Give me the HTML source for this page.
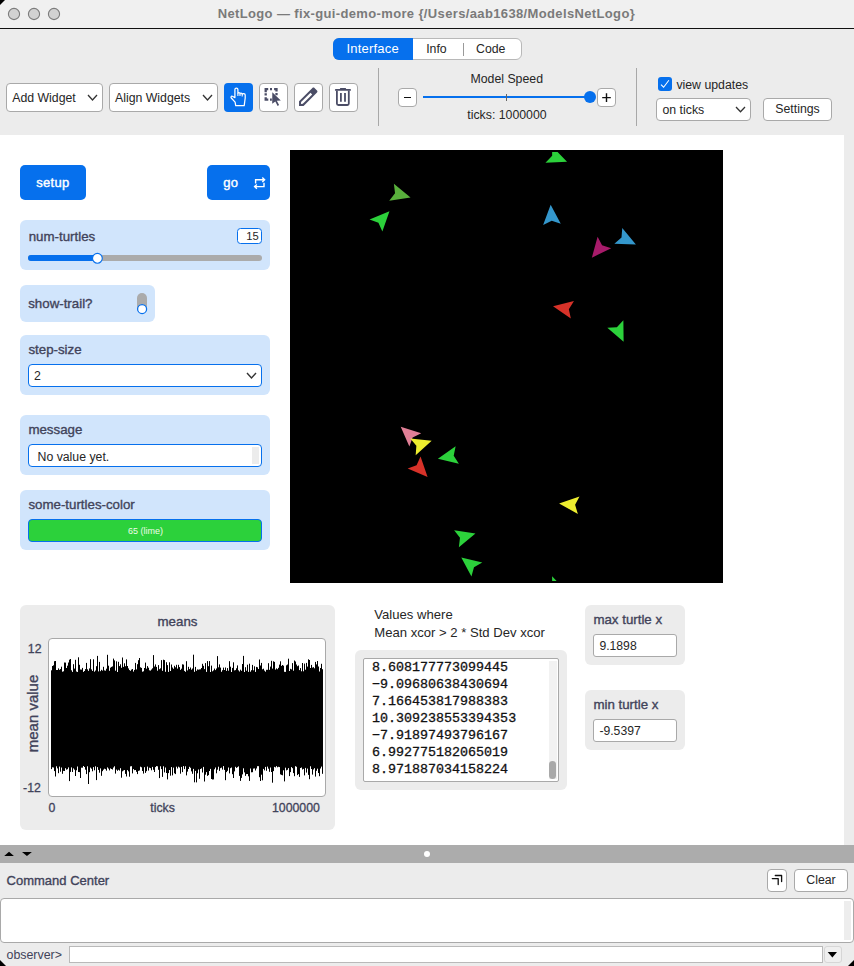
<!DOCTYPE html><html><head><meta charset="utf-8"><style>html,body{margin:0;padding:0;width:854px;height:966px;overflow:hidden;background:#ececec;}.t{position:absolute;white-space:nowrap;}.b{position:absolute;box-sizing:border-box;}svg{position:absolute;}</style></head><body>
<div class="b" style="left:0px;top:0px;width:854px;height:28px;background:#f0f0f0;border-radius:0px;"></div>
<div class="b" style="left:0px;top:28px;width:854px;height:1px;background:#111;border-radius:0px;"></div>
<svg style="left:7px;top:7px" width="14" height="14"><circle cx="7" cy="7" r="5.6" fill="#d2d2d2" stroke="#7c7c7c" stroke-width="1.1"/></svg>
<svg style="left:27px;top:7px" width="14" height="14"><circle cx="7" cy="7" r="5.6" fill="#d2d2d2" stroke="#7c7c7c" stroke-width="1.1"/></svg>
<svg style="left:47px;top:7px" width="14" height="14"><circle cx="7" cy="7" r="5.6" fill="#d2d2d2" stroke="#7c7c7c" stroke-width="1.1"/></svg>
<svg style="left:0;top:0" width="6" height="6"><path d="M0 0H5L0 5Z" fill="#000"/></svg>
<div class="t" style="left:217.70px;top:6.80px;font-size:13px;line-height:13px;font-weight:700;color:#7a7a7a;font-family:'Liberation Sans', sans-serif;letter-spacing:0.36px;">NetLogo — fix-gui-demo-more {/Users/aab1638/ModelsNetLogo}</div>
<div class="b" style="left:0px;top:29px;width:854px;height:106px;background:#ececec;border-radius:0px;"></div>
<div class="b" style="left:333px;top:38px;width:189px;height:22px;background:#fff;border-radius:6px;border:1px solid #b8b8b8;"></div>
<div class="b" style="left:333px;top:38px;width:80px;height:22px;background:#0670ed;border-radius:0px;border-radius:6px 0 0 6px;"></div>
<div class="t" style="left:346.50px;top:41.90px;font-size:13.0px;line-height:13.0px;font-weight:400;color:#fff;font-family:'Liberation Sans', sans-serif;letter-spacing:0.2px;">Interface</div>
<div class="t" style="left:426.20px;top:43.09px;font-size:12.3px;line-height:12.3px;font-weight:400;color:#262626;font-family:'Liberation Sans', sans-serif;">Info</div>
<div class="b" style="left:463px;top:43px;width:1px;height:13px;background:#9a9a9a;border-radius:0px;"></div>
<div class="t" style="left:476.00px;top:43.09px;font-size:12.3px;line-height:12.3px;font-weight:400;color:#262626;font-family:'Liberation Sans', sans-serif;">Code</div>
<div class="b" style="left:6px;top:83px;width:97px;height:29px;background:#fff;border-radius:4px;border:1px solid #a9a9a9;"></div>
<div class="t" style="left:12.20px;top:91.59px;font-size:12.3px;line-height:12.3px;font-weight:400;color:#262626;font-family:'Liberation Sans', sans-serif;">Add Widget</div>
<svg style="left:86px;top:93px" width="13" height="9"><path d="M2 2L6.5 7L11 2" fill="none" stroke="#333" stroke-width="1.3"/></svg>
<div class="b" style="left:109px;top:83px;width:109px;height:29px;background:#fff;border-radius:4px;border:1px solid #a9a9a9;"></div>
<div class="t" style="left:115.00px;top:91.59px;font-size:12.3px;line-height:12.3px;font-weight:400;color:#262626;font-family:'Liberation Sans', sans-serif;">Align Widgets</div>
<svg style="left:201px;top:93px" width="13" height="9"><path d="M2 2L6.5 7L11 2" fill="none" stroke="#333" stroke-width="1.3"/></svg>
<div class="b" style="left:224px;top:83px;width:29px;height:29px;background:#0670ed;border-radius:4px;"></div>
<div class="b" style="left:259px;top:83px;width:29px;height:29px;background:#fff;border-radius:4px;border:1px solid #a9a9a9;"></div>
<div class="b" style="left:294px;top:83px;width:29px;height:29px;background:#fff;border-radius:4px;border:1px solid #a9a9a9;"></div>
<div class="b" style="left:329px;top:83px;width:29px;height:29px;background:#fff;border-radius:4px;border:1px solid #a9a9a9;"></div>
<svg style="left:224px;top:83px" width="29" height="29" viewBox="0 0 29 29"><path d="M11.7 22.6 L11.1 19.2 L7.3 15.0 C6.6 14.2 7.2 12.8 8.3 13.3 L10.9 14.6 V6.4 C10.9 4.6 13.9 4.6 13.9 6.4 V10.4 C13.9 9.2 16.0 9.2 16.0 10.4 V10.8 C16.0 9.8 18.2 9.8 18.2 11.0 V11.4 C18.2 10.4 21.2 10.4 21.2 12.0 V15.0 L20.2 22.6 Z" fill="none" stroke="#fff" stroke-width="1.25" stroke-linejoin="round"/><path d="M13.9 10.4V13.0 M16.0 10.8V13.0 M18.2 11.4V13.4" stroke="#fff" stroke-width="1.1"/></svg>
<svg style="left:259px;top:83px" width="29" height="29" viewBox="0 0 29 29"><path d="M6.7 9.2V6.1H9.2 M11.0 6.1H13.0 M15.1 6.1H17.5V8.5 M6.7 10.2V12.5 M17.5 10.1V12.3 M6.7 14.2V16.6H9.3 M11.0 16.6H13.0" fill="none" stroke="#4b4d66" stroke-width="2.3"/><path d="M13.3 9.2 L21.8 17.5 L17.8 17.7 L20.1 22.0 L18.6 22.9 L16.3 18.6 L13.2 20.8 Z" fill="#4b4d66" stroke="#fff" stroke-width="0.6" paint-order="stroke"/></svg>
<svg style="left:294px;top:83px" width="29" height="29" viewBox="0 0 29 29"><path fill-rule="evenodd" fill="#4b4d66" d="M5.03 22.88 L5.05 18.35 L18.4 5.0 C19.0 4.4 19.9 4.4 20.5 5.0 L23.0 7.5 C23.6 8.1 23.6 9.0 23.0 9.6 L9.58 22.9 Z M6.95 20.95 L7.1 19.1 L16.5 9.7 L18.2 11.4 L8.8 20.8 Z"/></svg>
<svg style="left:329px;top:83px" width="29" height="29" viewBox="0 0 29 29"><path d="M6.8 6.95H21.1" stroke="#4b4d66" stroke-width="1.8" stroke-linecap="round"/><path d="M11.6 5.6H16.4" stroke="#4b4d66" stroke-width="1.4" stroke-linecap="round"/><path d="M7.9 7.5V20.6C7.9 21.5 8.5 22.0 9.4 22.0H18.4C19.3 22.0 19.8 21.5 19.8 20.6V7.5" fill="none" stroke="#4b4d66" stroke-width="1.8"/><path d="M11.9 10.1V18.7 M16.0 10.1V18.7" stroke="#4b4d66" stroke-width="1.8"/></svg>
<div class="b" style="left:378px;top:68px;width:1px;height:58px;background:#a8a8a8;border-radius:0px;"></div>
<div class="b" style="left:636px;top:68px;width:1px;height:58px;background:#a8a8a8;border-radius:0px;"></div>
<div class="t" style="left:470.50px;top:73.29px;font-size:12.3px;line-height:12.3px;font-weight:400;color:#262626;font-family:'Liberation Sans', sans-serif;">Model Speed</div>
<div class="b" style="left:398px;top:88px;width:19px;height:19px;background:#fff;border-radius:4px;border:1px solid #a9a9a9;"></div>
<div class="b" style="left:404px;top:96.5px;width:7px;height:1.5px;background:#111;border-radius:0px;"></div>
<div class="b" style="left:597px;top:88px;width:19px;height:19px;background:#fff;border-radius:4px;border:1px solid #a9a9a9;"></div>
<svg style="left:597px;top:88px" width="19" height="19"><path d="M5.2 9.6H13.8 M9.5 5.3V13.9" stroke="#111" stroke-width="1.4"/></svg>
<div class="b" style="left:423px;top:95.8px;width:167px;height:2.4000000000000057px;background:#0670ed;border-radius:0px;"></div>
<div class="b" style="left:506px;top:94px;width:1px;height:7px;background:#666;border-radius:0px;"></div>
<svg style="left:583px;top:90px" width="14" height="14"><circle cx="7" cy="7" r="6" fill="#0670ed"/></svg>
<div class="t" style="left:467.30px;top:108.99px;font-size:12.3px;line-height:12.3px;font-weight:400;color:#262626;font-family:'Liberation Sans', sans-serif;">ticks: 1000000</div>
<div class="b" style="left:658px;top:77px;width:14px;height:14px;background:#0670ed;border-radius:3px;"></div>
<svg style="left:658px;top:77px" width="14" height="14"><path d="M3.0 7.6L5.6 10.2L10.9 3.2" fill="none" stroke="#fff" stroke-width="1.05"/></svg>
<div class="t" style="left:676.40px;top:78.69px;font-size:12.3px;line-height:12.3px;font-weight:400;color:#262626;font-family:'Liberation Sans', sans-serif;">view updates</div>
<div class="b" style="left:656px;top:98px;width:95px;height:23px;background:#fff;border-radius:4px;border:1px solid #a9a9a9;"></div>
<div class="t" style="left:662.50px;top:103.59px;font-size:12.3px;line-height:12.3px;font-weight:400;color:#262626;font-family:'Liberation Sans', sans-serif;">on ticks</div>
<svg style="left:734px;top:105.4px" width="13" height="8.799999999999997"><path d="M2 2L6.5 6.799999999999997L11 2" fill="none" stroke="#333" stroke-width="1.3"/></svg>
<div class="b" style="left:763px;top:98px;width:69px;height:23px;background:#fff;border-radius:4px;border:1px solid #a9a9a9;"></div>
<div class="t" style="left:763.00px;top:103.39px;font-size:12.3px;line-height:12.3px;font-weight:400;color:#262626;font-family:'Liberation Sans', sans-serif;width:69px;text-align:center;">Settings</div>
<div class="b" style="left:0px;top:135px;width:844px;height:710px;background:#fff;border-radius:0px;"></div>
<div class="b" style="left:20px;top:165px;width:66px;height:35px;background:#0670ed;border-radius:5px;"></div>
<div class="t" style="left:36.20px;top:176.00px;font-size:13px;line-height:13px;font-weight:400;color:#fff;font-family:'Liberation Sans', sans-serif;letter-spacing:0.3px;-webkit-text-stroke:0.4px #fff;">setup</div>
<div class="b" style="left:207px;top:165px;width:63px;height:35px;background:#0670ed;border-radius:5px;"></div>
<div class="t" style="left:223.20px;top:176.00px;font-size:13px;line-height:13px;font-weight:400;color:#fff;font-family:'Liberation Sans', sans-serif;letter-spacing:0.3px;-webkit-text-stroke:0.4px #fff;">go</div>
<svg style="left:252px;top:175px" width="16" height="17" viewBox="0 0 16 17"><path d="M3.6 8.6V4.8H12.4 M10.3 2.6L12.6 4.8L10.3 7.0 M12 7.8V11.6H2.8 M4.9 9.4L2.6 11.6L4.9 13.8" fill="none" stroke="#fff" stroke-width="1.4"/></svg>
<div class="b" style="left:20px;top:220px;width:250px;height:50px;background:#d1e5fc;border-radius:6px;"></div>
<div class="t" style="left:28.70px;top:229.84px;font-size:13.3px;line-height:13.3px;font-weight:400;color:#41435a;font-family:'Liberation Sans', sans-serif;-webkit-text-stroke:0.35px #41435a;">num-turtles</div>
<div class="b" style="left:237px;top:228px;width:25px;height:16px;background:#fff;border-radius:3.5px;border:1.5px solid #0670ed;"></div>
<div class="t" style="left:237.00px;top:230.72px;font-size:11.2px;line-height:11.2px;font-weight:400;color:#262626;font-family:'Liberation Sans', sans-serif;width:21.8px;text-align:right;">15</div>
<div class="b" style="left:28px;top:255px;width:234px;height:6px;background:#ababab;border-radius:3px;"></div>
<div class="b" style="left:28px;top:255px;width:69px;height:6px;background:#0670ed;border-radius:3px;"></div>
<svg style="left:90px;top:251px" width="15" height="15"><circle cx="7.4" cy="7.3" r="4.9" fill="#fff" stroke="#0670ed" stroke-width="1.15"/></svg>
<div class="b" style="left:20px;top:285px;width:135px;height:37px;background:#d1e5fc;border-radius:6px;"></div>
<div class="t" style="left:28.20px;top:296.74px;font-size:13.3px;line-height:13.3px;font-weight:400;color:#41435a;font-family:'Liberation Sans', sans-serif;-webkit-text-stroke:0.35px #41435a;">show-trail?</div>
<div class="b" style="left:137px;top:293px;width:10px;height:20px;background:#ababab;border-radius:5px;"></div>
<svg style="left:135px;top:302px" width="14" height="14"><circle cx="7.1" cy="7" r="4.5" fill="#fff" stroke="#0670ed" stroke-width="1.25"/></svg>
<div class="b" style="left:20px;top:335px;width:250px;height:60px;background:#d1e5fc;border-radius:6px;"></div>
<div class="t" style="left:28.40px;top:342.64px;font-size:13.3px;line-height:13.3px;font-weight:400;color:#41435a;font-family:'Liberation Sans', sans-serif;-webkit-text-stroke:0.35px #41435a;">step-size</div>
<div class="b" style="left:28.4px;top:364px;width:233.6px;height:23px;background:#fff;border-radius:4px;border:1.5px solid #0670ed;"></div>
<div class="t" style="left:34.00px;top:369.59px;font-size:12.3px;line-height:12.3px;font-weight:400;color:#262626;font-family:'Liberation Sans', sans-serif;">2</div>
<svg style="left:245px;top:371px" width="13" height="9"><path d="M2 2L6.5 7L11 2" fill="none" stroke="#333" stroke-width="1.4"/></svg>
<div class="b" style="left:20px;top:415px;width:250px;height:60px;background:#d1e5fc;border-radius:6px;"></div>
<div class="t" style="left:28.40px;top:422.64px;font-size:13.3px;line-height:13.3px;font-weight:400;color:#41435a;font-family:'Liberation Sans', sans-serif;-webkit-text-stroke:0.35px #41435a;">message</div>
<div class="b" style="left:28.4px;top:444px;width:233.6px;height:23px;background:#fff;border-radius:4px;border:1.5px solid #0670ed;"></div>
<div class="t" style="left:37.50px;top:451.29px;font-size:12.3px;line-height:12.3px;font-weight:400;color:#262626;font-family:'Liberation Sans', sans-serif;">No value yet.</div>
<div class="b" style="left:252px;top:447px;width:7px;height:17px;background:#ececec;border-radius:0px;"></div>
<div class="b" style="left:20px;top:490px;width:250px;height:60px;background:#d1e5fc;border-radius:6px;"></div>
<div class="t" style="left:28.40px;top:497.64px;font-size:13.3px;line-height:13.3px;font-weight:400;color:#41435a;font-family:'Liberation Sans', sans-serif;-webkit-text-stroke:0.35px #41435a;">some-turtles-color</div>
<div class="b" style="left:28.4px;top:519px;width:233.6px;height:22.5px;background:#2cd13b;border-radius:4px;border:1.5px solid #0670ed;"></div>
<div class="t" style="left:28.40px;top:526.88px;font-size:9px;line-height:9px;font-weight:400;color:#eefbe9;font-family:'Liberation Sans', sans-serif;width:234px;text-align:center;">65 (lime)</div>
<div class="b" style="left:290px;top:150px;width:433px;height:433px;background:#000;border-radius:0px;"></div>
<svg style="left:290px;top:150px" width="433" height="433" viewBox="290 150 433 433"><defs><clipPath id="vc"><rect x="290" y="152" width="433" height="429"/></clipPath></defs><g clip-path="url(#vc)"><path d="M410.54 197.46L389.23 200.83L395.04 193.25L393.87 183.77Z" fill="#59b03c"/><path d="M389.47 211.15L382.37 231.52L378.43 222.82L369.53 219.38Z" fill="#2cd13b"/><path d="M550.67 204.71L560.77 223.78L551.72 220.74L543.13 224.92Z" fill="#3497cc"/><path d="M591.85 257.66L597.59 236.87L602.09 245.28L611.21 248.13Z" fill="#a71b6a"/><path d="M635.90 244.60L614.35 243.70L621.53 237.42L622.25 227.90Z" fill="#3497cc"/><path d="M553.03 306.32L573.96 301.10L568.84 309.16L570.84 318.50Z" fill="#d73229"/><path d="M623.62 341.86L607.33 327.71L616.87 327.28L623.37 320.29Z" fill="#2cd13b"/><path d="M400.72 426.63L421.24 433.30L412.62 437.42L409.36 446.40Z" fill="#e07f96"/><path d="M431.68 440.81L415.66 455.26L416.39 445.74L410.24 438.44Z" fill="#eded2f"/><path d="M437.90 458.66L455.63 446.36L453.70 455.71L458.87 463.74Z" fill="#2cd13b"/><path d="M427.58 476.89L407.66 468.60L416.58 465.18L420.54 456.50Z" fill="#d73229"/><path d="M559.10 503.43L579.50 496.40L575.10 504.87L577.90 514.00Z" fill="#eded2f"/><path d="M475.46 533.47L458.87 547.26L459.98 537.78L454.13 530.24Z" fill="#2cd13b"/><path d="M461.29 557.45L482.26 562.51L473.99 567.29L471.44 576.49Z" fill="#2cd13b"/><path d="M567.05 161.86L545.49 162.70L552.15 155.85L552.11 146.30Z" fill="#2cd13b"/><path d="M567.05 591.86L545.49 592.70L552.15 585.85L552.11 576.30Z" fill="#2cd13b"/></g></svg>
<div class="b" style="left:20px;top:605px;width:315px;height:225px;background:#ececec;border-radius:6px;"></div>
<div class="t" style="left:20.00px;top:614.64px;font-size:13.3px;line-height:13.3px;font-weight:400;color:#41435a;font-family:'Liberation Sans', sans-serif;width:315px;text-align:center;-webkit-text-stroke:0.35px #41435a;">means</div>
<div class="b" style="left:48px;top:638px;width:278px;height:159px;background:#fff;border-radius:4px;border:1px solid #a9a9a9;"></div>
<svg style="left:0;top:0" width="854" height="966"><path d="M51.5 670.3V769.1M52.5 666.0V767.3M53.5 665.3V767.5M54.5 661.2V771.1M55.5 661.0V776.5M56.5 670.0V766.3M57.5 670.0V768.4M58.5 668.4V773.2M59.5 669.8V766.6M60.5 669.1V771.7M61.5 666.7V767.5M62.5 671.7V773.8M63.5 671.3V770.9M64.5 662.5V771.0M65.5 662.6V768.2M66.5 668.0V769.7M67.5 665.7V769.2M68.5 662.5V767.4M69.5 659.7V781.1M70.5 659.0V771.9M71.5 670.3V767.4M72.5 671.9V772.0M73.5 664.2V768.4M74.5 668.6V769.7M75.5 659.8V776.0M76.5 671.5V770.3M77.5 672.0V766.5M78.5 657.3V772.0M79.5 664.8V772.1M80.5 669.5V778.0M81.5 669.6V767.7M82.5 667.9V767.7M83.5 671.9V766.0M84.5 671.0V767.0M85.5 669.1V769.7M86.5 662.9V774.1M87.5 669.3V766.3M88.5 670.9V784.0M89.5 668.4V772.2M90.5 659.2V767.6M91.5 669.4V768.7M92.5 670.9V771.3M93.5 659.3V767.1M94.5 671.7V770.3M95.5 670.5V766.3M96.5 666.2V780.1M97.5 655.9V767.1M98.5 671.4V769.9M99.5 661.9V772.7M100.5 671.2V768.4M101.5 669.8V775.8M102.5 670.6V771.2M103.5 666.8V769.7M104.5 670.4V768.7M105.5 670.7V769.2M106.5 668.7V770.7M107.5 654.8V767.4M108.5 665.7V768.6M109.5 670.8V770.4M110.5 667.7V768.4M111.5 666.9V769.0M112.5 666.4V769.5M113.5 658.6V767.5M114.5 660.4V766.3M115.5 670.7V773.6M116.5 661.3V769.6M117.5 672.0V770.8M118.5 661.8V769.8M119.5 666.1V770.6M120.5 664.3V768.2M121.5 667.8V777.7M122.5 657.5V771.3M123.5 666.9V770.5M124.5 663.3V770.0M125.5 666.2V773.9M126.5 659.4V776.5M127.5 666.0V770.1M128.5 668.4V771.4M129.5 670.1V776.7M130.5 670.8V766.4M131.5 669.6V766.2M132.5 669.0V773.4M133.5 671.6V769.1M134.5 669.9V770.2M135.5 662.9V770.0M136.5 669.4V771.8M137.5 664.2V774.1M138.5 660.2V770.9M139.5 658.0V770.5M140.5 667.3V766.7M141.5 667.9V767.3M142.5 671.7V771.0M143.5 671.3V773.6M144.5 668.0V767.2M145.5 662.6V772.9M146.5 668.7V771.2M147.5 666.1V766.6M148.5 667.7V770.6M149.5 670.3V767.7M150.5 670.6V768.2M151.5 669.5V770.3M152.5 668.3V766.9M153.5 655.1V769.8M154.5 666.5V772.0M155.5 664.4V767.1M156.5 666.9V766.1M157.5 670.7V766.3M158.5 665.1V769.8M159.5 669.2V778.1M160.5 668.3V766.3M161.5 660.1V769.1M162.5 670.8V776.9M163.5 659.7V766.3M164.5 660.1V772.4M165.5 671.8V767.5M166.5 662.2V773.0M167.5 665.1V779.4M168.5 671.9V773.1M169.5 662.3V770.0M170.5 671.0V775.7M171.5 664.5V767.1M172.5 667.5V775.4M173.5 668.8V767.6M174.5 665.8V773.3M175.5 667.3V774.1M176.5 664.8V766.7M177.5 668.6V768.5M178.5 664.8V766.7M179.5 667.1V767.5M180.5 669.9V773.7M181.5 668.7V766.9M182.5 664.3V772.1M183.5 664.6V766.1M184.5 670.9V769.1M185.5 671.8V766.3M186.5 661.2V775.4M187.5 670.4V771.6M188.5 666.8V769.0M189.5 669.1V766.8M190.5 667.5V767.8M191.5 669.7V771.4M192.5 668.5V773.8M193.5 654.7V768.9M194.5 671.8V782.3M195.5 666.9V770.9M196.5 670.8V782.4M197.5 669.4V773.3M198.5 669.7V769.5M199.5 669.4V778.8M200.5 669.3V769.0M201.5 668.0V768.4M202.5 663.8V772.5M203.5 665.8V766.9M204.5 669.1V781.5M205.5 663.1V774.7M206.5 671.9V772.1M207.5 661.1V775.9M208.5 666.2V775.1M209.5 661.1V771.0M210.5 672.0V768.9M211.5 665.6V779.0M212.5 671.3V779.5M213.5 670.4V779.4M214.5 668.6V769.3M215.5 670.1V767.5M216.5 668.5V773.3M217.5 656.1V769.7M218.5 667.3V766.7M219.5 664.4V770.9M220.5 667.6V768.2M221.5 671.8V767.6M222.5 670.2V769.6M223.5 667.6V766.1M224.5 670.0V769.9M225.5 667.5V780.2M226.5 670.9V772.1M227.5 668.1V770.8M228.5 670.7V767.5M229.5 661.2V773.4M230.5 666.7V768.2M231.5 672.0V767.5M232.5 667.9V774.2M233.5 662.3V778.0M234.5 670.4V771.4M235.5 670.1V766.8M236.5 668.3V767.9M237.5 665.4V767.2M238.5 670.3V766.4M239.5 671.5V775.9M240.5 669.7V780.9M241.5 670.8V777.9M242.5 664.0V774.4M243.5 655.9V768.3M244.5 672.0V772.4M245.5 667.2V775.9M246.5 670.7V774.1M247.5 664.7V774.0M248.5 671.9V776.3M249.5 663.7V780.9M250.5 671.7V768.5M251.5 670.2V772.3M252.5 664.9V772.2M253.5 670.3V768.6M254.5 666.3V768.4M255.5 671.9V770.5M256.5 666.9V768.5M257.5 667.3V766.2M258.5 669.0V766.2M259.5 659.5V777.2M260.5 665.5V781.0M261.5 662.9V774.7M262.5 669.3V780.3M263.5 668.7V768.9M264.5 670.6V770.4M265.5 671.7V766.9M266.5 669.8V770.8M267.5 669.8V766.6M268.5 663.2V768.7M269.5 669.8V771.8M270.5 666.6V767.5M271.5 660.8V772.0M272.5 668.6V782.7M273.5 661.3V771.1M274.5 661.9V766.9M275.5 669.6V767.4M276.5 668.4V766.1M277.5 669.2V767.3M278.5 667.8V766.8M279.5 664.6V767.1M280.5 661.3V774.4M281.5 665.9V774.9M282.5 665.0V775.3M283.5 665.7V770.3M284.5 671.8V781.4M285.5 671.9V767.7M286.5 665.3V770.4M287.5 664.5V769.8M288.5 658.7V768.1M289.5 671.0V776.1M290.5 668.8V772.1M291.5 669.4V767.1M292.5 663.1V768.2M293.5 670.7V773.1M294.5 660.5V776.2M295.5 661.5V766.2M296.5 664.5V766.8M297.5 666.2V775.1M298.5 665.5V774.1M299.5 670.1V776.9M300.5 668.1V768.0M301.5 671.3V767.5M302.5 663.0V769.5M303.5 671.3V768.9M304.5 663.6V775.4M305.5 669.7V767.9M306.5 662.9V772.6M307.5 666.6V768.6M308.5 659.3V774.9M309.5 660.0V779.2M310.5 668.0V766.3M311.5 664.9V769.0M312.5 667.6V774.6M313.5 667.2V769.5M314.5 668.3V768.2M315.5 661.9V776.6M316.5 664.4V770.8M317.5 661.0V768.7M318.5 666.5V773.0M319.5 671.5V776.2M320.5 668.0V768.5M321.5 663.8V766.6M322.5 669.2V773.8" stroke="#000" stroke-width="1"/></svg>
<div class="t" style="left:27.80px;top:642.59px;font-size:12.3px;line-height:12.3px;font-weight:400;color:#41435a;font-family:'Liberation Sans', sans-serif;-webkit-text-stroke:0.3px #41435a;">12</div>
<div class="t" style="left:23.10px;top:781.79px;font-size:12.3px;line-height:12.3px;font-weight:400;color:#41435a;font-family:'Liberation Sans', sans-serif;-webkit-text-stroke:0.3px #41435a;">-12</div>
<div class="t" style="left:48.40px;top:801.69px;font-size:12.3px;line-height:12.3px;font-weight:400;color:#41435a;font-family:'Liberation Sans', sans-serif;-webkit-text-stroke:0.3px #41435a;">0</div>
<div class="t" style="left:150.30px;top:801.89px;font-size:12.3px;line-height:12.3px;font-weight:400;color:#41435a;font-family:'Liberation Sans', sans-serif;-webkit-text-stroke:0.3px #41435a;">ticks</div>
<div class="t" style="left:272.00px;top:801.69px;font-size:12.3px;line-height:12.3px;font-weight:400;color:#41435a;font-family:'Liberation Sans', sans-serif;-webkit-text-stroke:0.3px #41435a;">1000000</div>
<div class="t" style="left:-8.0px;top:705.7px;width:80px;height:15px;line-height:15px;font-size:15px;font-weight:400;color:#41435a;text-align:center;-webkit-text-stroke:0.35px #41435a;font-family:'Liberation Sans',sans-serif;transform:rotate(-90deg);">mean value</div>
<div class="t" style="left:374.30px;top:607.61px;font-size:13.1px;line-height:13.1px;font-weight:400;color:#262626;font-family:'Liberation Sans', sans-serif;">Values where</div>
<div class="t" style="left:374.30px;top:625.81px;font-size:13.1px;line-height:13.1px;font-weight:400;color:#262626;font-family:'Liberation Sans', sans-serif;">Mean xcor &gt; 2 * Std Dev xcor</div>
<div class="b" style="left:355px;top:650px;width:212px;height:139.5px;background:#ececec;border-radius:6px;"></div>
<div class="b" style="left:363px;top:658px;width:196px;height:124px;background:#fff;border-radius:2px;border:1px solid #a9a9a9;"></div>
<div class="b" style="left:549px;top:661px;width:8px;height:118px;background:#f2f2f2;border-radius:0px;"></div>
<div class="b" style="left:549.3px;top:761px;width:6.7000000000000455px;height:17.5px;background:#a9a9a9;border-radius:3.5px;"></div>
<div class="t" style="left:372.00px;top:660.70px;font-size:13.35px;line-height:13.35px;font-weight:400;color:#111;font-family:'Liberation Mono', monospace;-webkit-text-stroke:0.3px #111;">8.608177773099445</div>
<div class="t" style="left:372.00px;top:677.70px;font-size:13.35px;line-height:13.35px;font-weight:400;color:#111;font-family:'Liberation Mono', monospace;-webkit-text-stroke:0.3px #111;">−9.09680638430694</div>
<div class="t" style="left:372.00px;top:694.70px;font-size:13.35px;line-height:13.35px;font-weight:400;color:#111;font-family:'Liberation Mono', monospace;-webkit-text-stroke:0.3px #111;">7.166453817988383</div>
<div class="t" style="left:372.00px;top:711.70px;font-size:13.35px;line-height:13.35px;font-weight:400;color:#111;font-family:'Liberation Mono', monospace;-webkit-text-stroke:0.3px #111;">10.309238553394353</div>
<div class="t" style="left:372.00px;top:728.70px;font-size:13.35px;line-height:13.35px;font-weight:400;color:#111;font-family:'Liberation Mono', monospace;-webkit-text-stroke:0.3px #111;">−7.91897493796167</div>
<div class="t" style="left:372.00px;top:745.70px;font-size:13.35px;line-height:13.35px;font-weight:400;color:#111;font-family:'Liberation Mono', monospace;-webkit-text-stroke:0.3px #111;">6.992775182065019</div>
<div class="t" style="left:372.00px;top:762.70px;font-size:13.35px;line-height:13.35px;font-weight:400;color:#111;font-family:'Liberation Mono', monospace;-webkit-text-stroke:0.3px #111;">8.971887034158224</div>
<div class="b" style="left:585px;top:605px;width:100px;height:60px;background:#ececec;border-radius:6px;"></div>
<div class="t" style="left:593.40px;top:612.64px;font-size:13.3px;line-height:13.3px;font-weight:400;color:#41435a;font-family:'Liberation Sans', sans-serif;-webkit-text-stroke:0.35px #41435a;">max turtle x</div>
<div class="b" style="left:593px;top:634px;width:84px;height:23px;background:#fff;border-radius:3px;border:1px solid #a9a9a9;"></div>
<div class="t" style="left:599.40px;top:639.67px;font-size:12.2px;line-height:12.2px;font-weight:400;color:#262626;font-family:'Liberation Sans', sans-serif;">9.1898</div>
<div class="b" style="left:585px;top:690px;width:100px;height:60px;background:#ececec;border-radius:6px;"></div>
<div class="t" style="left:593.40px;top:697.64px;font-size:13.3px;line-height:13.3px;font-weight:400;color:#41435a;font-family:'Liberation Sans', sans-serif;-webkit-text-stroke:0.35px #41435a;">min turtle x</div>
<div class="b" style="left:593px;top:719px;width:84px;height:23px;background:#fff;border-radius:3px;border:1px solid #a9a9a9;"></div>
<div class="t" style="left:599.40px;top:724.67px;font-size:12.2px;line-height:12.2px;font-weight:400;color:#262626;font-family:'Liberation Sans', sans-serif;">-9.5397</div>
<div class="b" style="left:0px;top:845px;width:854px;height:18px;background:#acacac;border-radius:0px;"></div>
<svg style="left:0;top:845px" width="40" height="18"><path d="M4.2 11H13.9L9.05 6.7Z M22 6.9H31.9L26.95 11.1Z" fill="#000"/></svg>
<svg style="left:420px;top:847px" width="14" height="14"><circle cx="7" cy="7" r="3" fill="#fff"/></svg>
<div class="t" style="left:6.60px;top:874.20px;font-size:13.0px;line-height:13.0px;font-weight:400;color:#41435a;font-family:'Liberation Sans', sans-serif;-webkit-text-stroke:0.35px #41435a;">Command Center</div>
<div class="b" style="left:767.4px;top:869.4px;width:20.100000000000023px;height:22.600000000000023px;background:#fff;border-radius:4px;border:1px solid #a9a9a9;"></div>
<svg style="left:767px;top:869px" width="21" height="23"><path d="M8.3 6.5H14.6V12.5 M5.3 9.6H11.2V15.6" fill="none" stroke="#111" stroke-width="1.3" stroke-linecap="round" stroke-linejoin="round"/></svg>
<div class="b" style="left:794.3px;top:869.4px;width:53.40000000000009px;height:22.300000000000068px;background:#fff;border-radius:4px;border:1px solid #a9a9a9;"></div>
<div class="t" style="left:794.30px;top:874.39px;font-size:12.3px;line-height:12.3px;font-weight:400;color:#262626;font-family:'Liberation Sans', sans-serif;width:53.4px;text-align:center;">Clear</div>
<div class="b" style="left:0px;top:898px;width:854px;height:45px;background:#fff;border-radius:4px;border:1px solid #a9a9a9;"></div>
<div class="b" style="left:844px;top:901px;width:7px;height:39px;background:#ededed;border-radius:0px;"></div>
<div class="t" style="left:6.50px;top:948.50px;font-size:12.4px;line-height:12.4px;font-weight:400;color:#41435a;font-family:'Liberation Sans', sans-serif;">observer&gt;</div>
<div class="b" style="left:69px;top:946px;width:754px;height:17px;background:#fff;border-radius:0px;border:1px solid #b9b9b9;"></div>
<div class="b" style="left:824px;top:946px;width:18px;height:17px;background:#efefef;border-radius:3px;border:1px solid #d6d6d6;"></div>
<svg style="left:824px;top:946px" width="18" height="17"><path d="M3.7 5.9H13L8.35 11.4Z" fill="#000"/></svg>
<svg style="left:848px;top:960px" width="6" height="6"><path d="M6 0V6H0Z" fill="#000"/></svg>
<svg style="left:0;top:960px" width="6" height="6"><path d="M0 0L6 6H0Z" fill="#000"/></svg>
</body></html>
